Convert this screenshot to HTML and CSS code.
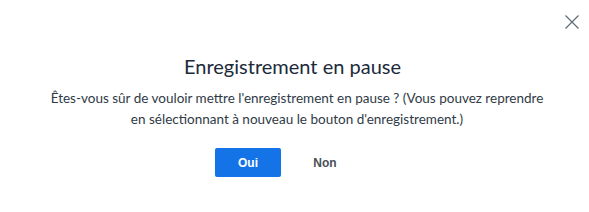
FILE: index.html
```html
<!DOCTYPE html>
<html lang="fr">
<head>
<meta charset="utf-8">
<link rel="stylesheet" href="styles.css">
</head>
<body>
<div class="dialog">
  <button class="close" aria-label="Fermer">
    <svg width="14" height="14" viewBox="0 0 14 14"><path d="M0.5 0.5 L13.5 13.5 M13.5 0.5 L0.5 13.5" stroke="#5f6b78" stroke-width="1.2" fill="none"/></svg>
  </button>
  <h1 class="title">Enregistrement en pause</h1>
  <p class="message">Êtes-vous sûr de vouloir mettre l'enregistrement en pause ? (Vous pouvez reprendre<br>en sélectionnant à nouveau le bouton d'enregistrement.)</p>
  <div class="actions">
    <button class="btn primary">Oui</button>
    <button class="btn secondary">Non</button>
  </div>
</div>
</body>
</html>
```
FILE: styles.css
```css
html, body {
  margin: 0;
  padding: 0;
  background: #ffffff;
}
.dialog {
  position: relative;
  width: 589px;
  height: 212px;
  display: flex;
  flex-direction: column;
  align-items: center;
  font-family: "Lato", "Noto Sans", sans-serif;
  box-sizing: border-box;
  padding-top: 52px;
}
.close {
  position: absolute;
  top: 15px;
  left: 565px;
  width: 14px;
  height: 14px;
  padding: 0;
  border: 0;
  background: none;
  display: flex;
}
.title {
  margin: 0;
  font-size: 20px;
  font-weight: 400;
  line-height: 28px;
  color: #1b2a3a;
  padding-right: 4px;
}
.message {
  margin: 8px 0 0;
  font-size: 13.5px;
  line-height: 21px;
  color: #2f3a46;
  text-align: center;
  padding-left: 5px;
}
.actions {
  margin-top: 18px;
  display: flex;
  gap: 11px;
  padding-right: 16px;
}
.btn {
  width: 66px;
  height: 29px;
  border: 0;
  border-radius: 2px;
  font-family: "Liberation Sans", Arial, sans-serif;
  font-weight: 700;
  font-size: 12px;
  padding: 0;
}
.primary {
  background: #1473e6;
  color: #ffffff;
}
.secondary {
  background: transparent;
  color: #4a4f57;
}
```
